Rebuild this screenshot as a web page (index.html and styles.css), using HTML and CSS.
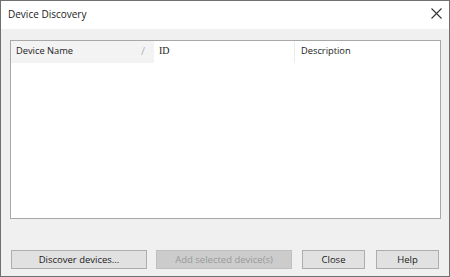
FILE: index.html
```html
<!DOCTYPE html>
<html>
<head>
<meta charset="utf-8">
<link rel="stylesheet" href="styles.css">
</head>
<body>
<div class="window">
  <div class="titlebar">
    <span class="title">Device Discovery</span>
    <svg class="close-x" width="11" height="11" viewBox="0 0 11 11"><path d="M0.5 0.5 L10.5 10.5 M10.5 0.5 L0.5 10.5" stroke="#333" stroke-width="1.1" fill="none"/></svg>
  </div>
  <div class="content">
    <div class="list">
      <div class="header">
        <div class="col col-name"><span>Device Name</span><span class="slash">/</span></div>
        <div class="col col-id">ID</div>
        <div class="col col-desc">Description</div>
      </div>
    </div>
    <div class="buttons">
      <button class="btn btn-wide">Discover devices...</button>
      <button class="btn btn-wide btn-disabled">Add selected device(s)</button>
      <button class="btn btn-small btn-close">Close</button>
      <button class="btn btn-small btn-help">Help</button>
    </div>
  </div>
</div>
</body>
</html>
```
FILE: styles.css
```css
html, body {
  margin: 0;
  padding: 0;
  background: #f0f0f0;
}
body {
  font-family: "Open Sans", "Noto Sans", "Liberation Sans", sans-serif;
  font-size: 9.5px;
  color: #000;
}
.window {
  width: 450px;
  height: 277px;
  box-sizing: border-box;
  border: 1px solid #707070;
  display: flex;
  flex-direction: column;
  background: #f0f0f0;
}
.titlebar {
  height: 25px;
  background: #ffffff;
  display: flex;
  align-items: center;
  justify-content: space-between;
  padding: 0 6px 3px 7px;
  flex: none;
}
.title {
  font-size: 10px;
  color: #1a1a1a;
}
.close-x {
  display: block;
  margin-right: 1px;
}
.content {
  flex: 1;
  display: flex;
  flex-direction: column;
  padding: 11px 8px 10px 9px;
}
.list {
  height: 179px;
  box-sizing: border-box;
  border: 1px solid #a8a8a8;
  background: #ffffff;
}
.header {
  display: flex;
  height: 22px;
}
.col {
  display: flex;
  align-items: center;
  box-sizing: border-box;
  font-size: 9.3px;
  color: #222;
  padding-bottom: 3px;
}
.col-name {
  width: 143px;
  background: #f3f3f3;
  padding-left: 5px;
  padding-right: 9px;
  justify-content: space-between;
}
.slash {
  color: #b5b5b5;
  font-size: 11px;
}
.col-id {
  width: 141px;
  padding-left: 5px;
  border-right: 1px solid #ececec;
  font-family: "Liberation Serif", serif;
  font-size: 10px;
}
.col-desc {
  flex: 1;
  padding-left: 6px;
}
.buttons {
  display: flex;
  margin-top: 31px;
  padding-left: 1px;
}
.btn {
  height: 19px;
  box-sizing: border-box;
  border: 1px solid #adadad;
  background: #e1e1e1;
  font-family: inherit;
  font-size: 9.5px;
  color: #1a1a1a;
  padding: 0;
  margin: 0;
  display: flex;
  align-items: center;
  justify-content: center;
}
.btn-wide {
  width: 136px;
  margin-right: 9px;
}
.btn-disabled {
  background: #cccccc;
  border-color: #bfbfbf;
  color: #9a9a9a;
  margin-right: 10px;
}
.btn-small {
  width: 63px;
}
.btn-close {
  margin-right: 11px;
}
```
